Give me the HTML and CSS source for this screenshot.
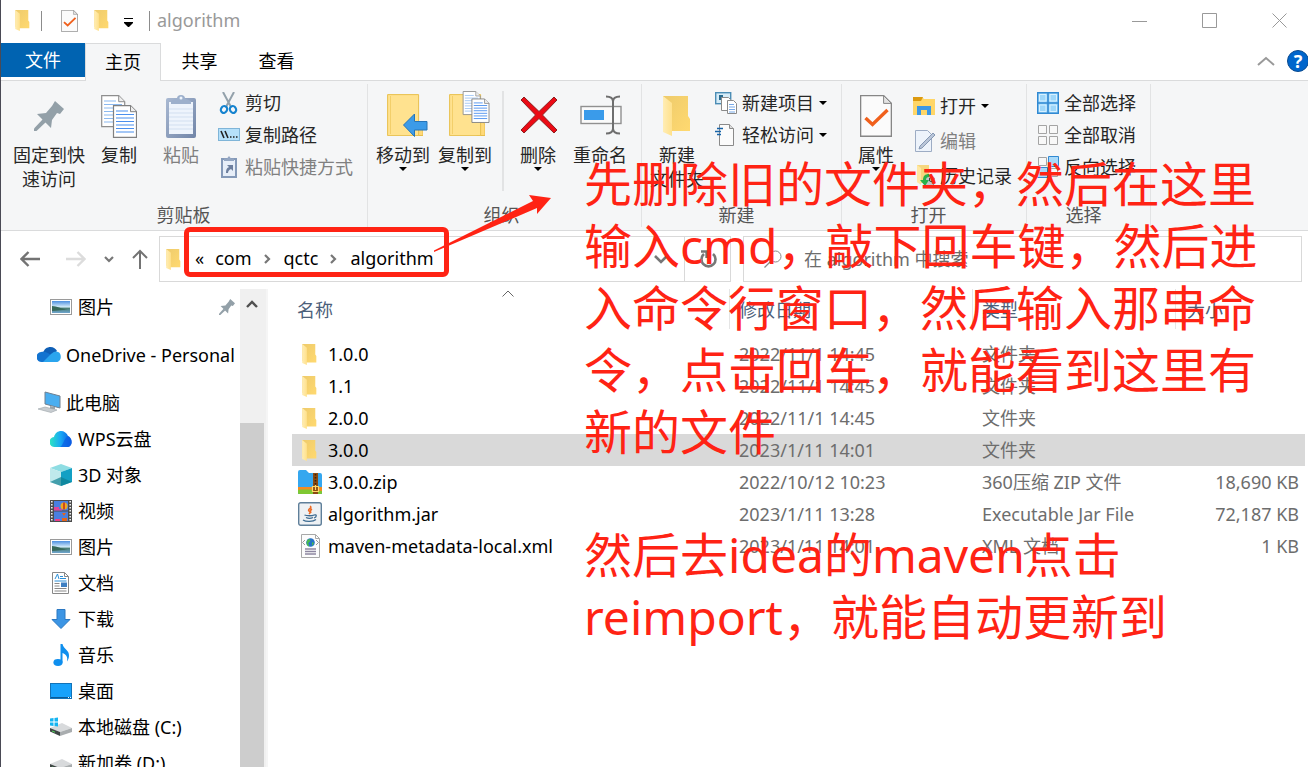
FILE: index.html
```
<!DOCTYPE html>
<html lang="zh-CN">
  <head>
    <meta charset="utf-8">
    <meta name="viewport" content="width=device-width, initial-scale=1.0">
    <title>algorithm</title>
    <link rel="stylesheet" href="styles.css">
  </head>
  <body>
    <!-- icon set -->
    <svg class="defs" aria-hidden="true">
      <defs>
        <linearGradient id="gFolder" x1="0" y1="0" x2="1" y2="1"><stop offset="0" stop-color="#eecb6c"/><stop offset="1" stop-color="#ffd970"/></linearGradient>
        <linearGradient id="gFlap" x1="0" y1="0" x2="1" y2="0"><stop offset="0" stop-color="#ffedb5"/><stop offset="1" stop-color="#ffe18c"/></linearGradient>
        <linearGradient id="gClip" x1="0" y1="0" x2="1" y2="1"><stop offset="0" stop-color="#a9b9d2"/><stop offset="1" stop-color="#7185a8"/></linearGradient>
        <linearGradient id="gWps" x1="0" y1="0" x2="1" y2="0"><stop offset="0" stop-color="#2fe6c0"/><stop offset=".5" stop-color="#18a8f5"/><stop offset="1" stop-color="#0a55e0"/></linearGradient>
        <linearGradient id="gSky" x1="0" y1="0" x2="0" y2="1"><stop offset="0" stop-color="#4d8fe0"/><stop offset=".5" stop-color="#d5ecfa"/><stop offset=".6" stop-color="#4a7d74"/><stop offset="1" stop-color="#6fa6cf"/></linearGradient>
      </defs>
      <symbol id="folder" viewBox="10 4 28 40">
        <path d="M10 4h25v20l2 3v12H18l-8-3z" fill="url(#gFolder)"/>
        <path d="M10 4l9 7v33l-9-4z" fill="url(#gFlap)"/>
      </symbol>
      <symbol id="pin" viewBox="9 8 30 30">
        <path d="M30 8l9 8-4 5-3-1-5 7-1 8-14-14 9-1 6-7z" fill="#93a0a8"/>
        <path d="M18 26L9 35.500V38h2.500L21 29z" fill="#93a0a8"/>
      </symbol>
      <symbol id="pages" viewBox="0 0 36 43">
        <path d="M.7.700h17l6 6v25H.7z" fill="#fff" stroke="#8e8e8e" stroke-width="1.200"/>
        <path d="M17.700.700v6h6" fill="#eee" stroke="#8e8e8e"/>
        <path d="M3 6h12M3 9.500h18M3 13h18M3 16.500h18M3 20h18M3 23.500h18M3 27h18" stroke="#8bb9f0"/>
        <path d="M12.500 10.700h17l6 6v25.600h-23z" fill="#fff" stroke="#808080" stroke-width="1.200"/>
        <path d="M29.500 10.700v6h6" fill="#eee" stroke="#808080"/>
        <path d="M15 16h12M15 19.500h18M15 23h18M15 26.500h18M15 30h18M15 33.500h18M15 37h18" stroke="#4a8fee" stroke-width="1.200"/>
      </symbol>
      <symbol id="clipboard" viewBox="0 0 30 43">
        <rect x="0" y="3" width="30" height="40" rx="2" fill="url(#gClip)"/>
        <rect x="3" y="7" width="24" height="32" fill="#eef4fc"/>
        <path d="M3 14h24M3 18h24M3 22h24M3 26h24M3 30h24M3 34h24" stroke="#d2dff0"/>
        <path d="M5 9V6l6-2.500a4 3.500 0 0 1 8 0L25 6v3z" fill="#9db0cc"/>
        <circle cx="15" cy="3" r="1.500" fill="#eef4fc"/>
      </symbol>
      <symbol id="check-page" viewBox="10 2 32 42">
        <path d="M10.600 2.600h23l7.800 7.800v32.800H10.600z" fill="#fbfbfb" stroke="#868686" stroke-width="1.400"/>
        <path d="M33.600 2.600v7.800h7.800z" fill="#e3e3e3" stroke="#868686"/>
        <path d="M15.500 25l7 6.500 15-14.500" fill="none" stroke="#f0601c" stroke-width="3.400"/>
      </symbol>
      <symbol id="square-folder" viewBox="0 0 36 44">
        <path d="M28 32h3l3-3 2 4v10.500H28z" fill="#ffd978" stroke="#e6bd4c"/>
        <path d="M.600 2.600h31v41H.6z" fill="#ffe28f" stroke="#e8c04f"/>
        <path d="M3.500 4v38" stroke="#f3cf6a"/>
      </symbol>
      <symbol id="caret" viewBox="0 0 8 4"><path d="M0 0h8L4 4z" fill="#000"/></symbol>
      <symbol id="chevron" viewBox="0 0 10 10"><path d="M3 1l4 4-4 4" fill="none" stroke="#777" stroke-width="2.200"/></symbol>
      <symbol id="picture" viewBox="0 0 22 16">
        <rect x=".5" y=".5" width="21" height="15" fill="#fff" stroke="#9a9a9a"/>
        <rect x="2" y="2" width="18" height="12" fill="url(#gSky)"/>
        <path d="M2 7c5 0 9 3 16 3.500L2 12z" fill="#37685a"/>
      </symbol>
      <symbol id="drive" viewBox="0 0 22 22">
        <path d="M0 12l12-5 10 5-12 4z" fill="#d8dadc"/>
        <path d="M0 12l10 4v4L0 15.500z" fill="#3f4545"/>
        <path d="M10 16l12-4v4l-12 4z" fill="#a9adaf"/>
        <path d="M2 15l3 1.200" stroke="#4fd65a"/>
      </symbol>
    </svg>

    <div class="window">
      <header class="titlebar">
        <svg class="icon-folder"><use href="#folder"/></svg>
        <span class="divider"></span>
        <button class="quick" aria-label="属性"><svg class="quick-check"><use href="#check-page"/></svg></button>
        <button class="quick" aria-label="新建文件夹"><svg class="icon-folder"><use href="#folder"/></svg></button>
        <button class="quick quick-more" aria-label="自定义"><svg width="9" height="9" viewBox="0 0 9 9"><path d="M0 .5h9" stroke="#000"/><path d="M0 4h9v1L5 9H4L0 5z"/></svg></button>
        <span class="divider"></span>
        <span class="title">algorithm</span>
        <div class="window-buttons">
          <button aria-label="最小化"><svg viewBox="0 0 16 16"><path d="M0 8.500h15"/></svg></button>
          <button aria-label="最大化"><svg viewBox="0 0 16 16"><path d="M.5.500h14v14H.5z"/></svg></button>
          <button aria-label="关闭"><svg viewBox="0 0 16 16"><path d="M.5.500l14 14M14.500.500l-14 14"/></svg></button>
        </div>
      </header>

      <nav class="tabs">
        <button class="tab tab-file">文件</button>
        <button class="tab tab-active">主页</button>
        <button class="tab">共享</button>
        <button class="tab">查看</button>
        <div class="tabs-right">
          <button aria-label="折叠功能区"><svg width="18" height="10" viewBox="0 0 18 10"><path d="M1 9l8-7 8 7" fill="none" stroke="#999" stroke-width="2"/></svg></button>
          <button class="help" aria-label="帮助">?</button>
        </div>
      </nav>

      <section class="ribbon">
        <div class="group group-clipboard">
          <div class="group-body">
            <button class="big big-wide"><span class="big-icon"><svg width="30" height="30"><use href="#pin"/></svg></span>固定到快<br>速访问</button>
            <button class="big"><span class="big-icon"><svg width="36" height="43"><use href="#pages"/></svg></span>复制</button>
            <button class="big disabled"><span class="big-icon"><svg width="30" height="43"><use href="#clipboard"/></svg></span>粘贴</button>
            <div class="small-list">
              <button class="small">
                <svg viewBox="0 0 22 22"><path d="M5 0l7.500 14M16 0L8.500 14" stroke="#93a1ab" stroke-width="2"/><g fill="none" stroke="#1583cf" stroke-width="2.200"><ellipse cx="6" cy="17.500" rx="3" ry="3.500" transform="rotate(30 6 17.500)"/><ellipse cx="15" cy="17.500" rx="3" ry="3.500" transform="rotate(-30 15 17.500)"/></g></svg>剪切</button>
              <button class="small">
                <svg viewBox="0 0 22 22"><rect x=".5" y="4.500" width="21" height="12" fill="#b5e0fa" stroke="#7fb5d8"/><path d="M3 7l3 7M7 7l3 7" stroke="#222" stroke-width="1.600"/><path d="M12 13h1.500M15 13h1.500M18 13h1.500" stroke="#222" stroke-width="1.600"/></svg>复制路径</button>
              <button class="small disabled">
                <svg viewBox="0 0 22 22"><rect x="4" y="3" width="14" height="18" fill="#e7eef8" stroke="#8499b8" stroke-width="2"/><path d="M6 5V2.500h3L11 0l2 2.500h3V5z" fill="#93a6c2"/><path d="M8 17c0-4 1-5 3-6l-2-2h6v6l-2-2c-2 1-3 2-3 4z" fill="#6d7f9e"/></svg>粘贴快捷方式</button>
            </div>
          </div>
          <div class="group-name">剪贴板</div>
        </div>

        <div class="group group-organize">
          <div class="group-body">
            <button class="big"><span class="big-icon">
              <svg viewBox="0 0 48 48"><use href="#square-folder" x="8" y="0" width="36" height="44"/><path d="M24.500 33l11-11v7.500H48V38H35.500v6.500z" fill="#3c9be8" stroke="#2674b8"/></svg>
            </span>移动到<svg class="caret"><use href="#caret"/></svg></button>
            <button class="big"><span class="big-icon">
              <svg viewBox="0 0 48 48"><use href="#square-folder" x="8" y="0" width="36" height="44"/><use href="#pages" x="21" y="-1" width="28" height="32"/></svg>
            </span>复制到<svg class="caret"><use href="#caret"/></svg></button>
            <span class="group-split"></span>
            <button class="big"><span class="big-icon">
              <svg viewBox="0 0 48 48"><path d="M7 8l3-3 15 14.500L40 5l3 3-14.500 15L43 38l-3 3-15-14.500L10 41l-3-3 14.500-15z" fill="#eb0a14" stroke="#8c2020"/></svg>
            </span>删除<svg class="caret"><use href="#caret"/></svg></button>
            <button class="big"><span class="big-icon">
              <svg viewBox="0 0 48 48"><rect x="5" y="14.500" width="40" height="17" fill="#fafafa" stroke="#909090" stroke-width="1.400"/><rect x="8" y="18" width="20" height="10" fill="#3a9bea"/><path d="M30 4.500c4 0 7 1 7 5v27c0 4-3 5-7 5M44 4.500c-4 0-7 1-7 5v27c0 4 3 5 7 5" fill="none" stroke="#6e6e6e" stroke-width="2"/></svg>
            </span>重命名</button>
          </div>
          <div class="group-name">组织</div>
        </div>

        <div class="group group-new">
          <div class="group-body">
            <button class="big"><span class="big-icon"><svg width="28" height="40"><use href="#folder"/></svg></span>新建<br>文件夹</button>
            <div class="small-list">
              <button class="small">
                <svg viewBox="0 0 22 22"><rect x=".7" y=".7" width="15" height="11" fill="#d5ecf8" stroke="#4b8db5" stroke-width="1.400"/><rect x="4" y="3" width="4" height="5" fill="#2b6b8f"/><path d="M6.500 5.500h7l2 2v11h-9z" fill="#fff" stroke="#8a8a8a"/><path d="M12.500 8.500h6l3 3v10h-9z" fill="#fff" stroke="#8a8a8a"/><path d="M14 12.500h5M14 15h6M14 17.500h6M14 20h6" stroke="#77a9e8"/></svg>新建项目<svg class="caret"><use href="#caret"/></svg></button>
              <button class="small">
                <svg viewBox="0 0 22 22"><path d="M4.500.500h10l4 4v17h-14z" fill="#fbfbfb" stroke="#8a8a8a"/><path d="M14.500.500v4h4" fill="#ddd" stroke="#8a8a8a"/><path d="M2 4.500h6M0 7.500h6M2 10.500h4" stroke="#1763a8" stroke-width="1.300"/></svg>轻松访问<svg class="caret"><use href="#caret"/></svg></button>
            </div>
          </div>
          <div class="group-name">新建</div>
        </div>

        <div class="group group-open">
          <div class="group-body">
            <button class="big"><span class="big-icon"><svg width="32" height="42"><use href="#check-page"/></svg></span>属性<svg class="caret"><use href="#caret"/></svg></button>
            <div class="small-list small-list-loose">
              <button class="small">
                <svg viewBox="0 0 22 22"><path d="M0 2h9l2 2h11v16H0z" fill="#ffd667"/><path d="M0 2h10l-2 4H0z" fill="#dc9a10"/><path d="M4 20v-9h14v9h-4v-5H8v5z" fill="#3c97e4"/></svg>打开<svg class="caret"><use href="#caret"/></svg></button>
              <button class="small disabled">
                <svg viewBox="0 0 22 22"><path d="M2.500.500h12l4 4v17h-16z" fill="#edf3fb" stroke="#9dacc4"/><path d="M20 3l2 2L9 18l-3 1 1-3z" fill="#b9c5d8" stroke="#8497b3"/></svg>编辑</button>
              <button class="small">
                <svg viewBox="0 0 22 22"><path d="M4 0h12v18H8l-4-1z" fill="#f6d77f"/><path d="M4 0l4 3v17l-4-3z" fill="#ffe7a2"/><circle cx="16.500" cy="16" r="5.500" fill="#c2c7c9" stroke="#777"/><path d="M16.500 13v3l3 1" fill="none" stroke="#444"/><path d="M16 9c-4 0-6 2-6 6H7l5 6 4-6h-3c0-2 1-3 3-3z" fill="#2bb24a"/></svg>历史记录</button>
            </div>
          </div>
          <div class="group-name">打开</div>
        </div>

        <div class="group group-select">
          <div class="group-body">
            <div class="small-list">
              <button class="small">
                <svg viewBox="0 0 22 22"><path d="M.7.700h20.600v20.600H.7z" fill="#9ed7fa" stroke="#3189d2" stroke-width="1.400"/><path d="M11 0v22M0 11h22" stroke="#3189d2" stroke-width="1.600"/><path d="M2.500 2.500h6.500v6.500H2.500zM13 2.500h6.500v6.500H13zM2.500 13h6.500v6.500H2.500zM13 13h6.500v6.500H13z" fill="none" stroke="#d7f0ff"/></svg>全部选择</button>
              <button class="small">
                <svg viewBox="0 0 22 22"><path d="M1.500 1.500h8v8h-8zM12.500 1.500h8v8h-8zM1.500 12.500h8v8h-8zM12.500 12.500h8v8h-8z" fill="#f8f8f8" stroke="#a4a4a4"/></svg>全部取消</button>
              <button class="small">
                <svg viewBox="0 0 22 22"><path d="M1.500 1.500h8v8h-8zM12.500 12.500h8v8h-8z" fill="#f8f8f8" stroke="#a4a4a4"/><path d="M11.500.500h10v10h-10zM.5 11.500h10v10H.5z" fill="#a9dafa" stroke="#3189d2"/></svg>反向选择</button>
            </div>
          </div>
          <div class="group-name">选择</div>
        </div>
      </section>

      <div class="address-bar">
        <div class="history">
          <button aria-label="返回"><svg width="20" height="16" viewBox="0 0 20 16"><path d="M20 8H2M8.500 1L1.500 8l7 7" fill="none" stroke="#737373" stroke-width="2.400"/></svg></button>
          <button aria-label="前进"><svg width="20" height="16" viewBox="0 0 20 16"><path d="M0 8h18M11.500 1l7 7-7 7" fill="none" stroke="#dcdcdc" stroke-width="2.400"/></svg></button>
          <button aria-label="最近浏览的位置"><svg width="10" height="10" viewBox="0 0 10 10"><path d="M1 3l4 4 4-4" fill="none" stroke="#777" stroke-width="2.200"/></svg></button>
          <button aria-label="上移"><svg width="16" height="20" viewBox="0 0 16 20"><path d="M8 20V2M1 9l7-7 7 7" fill="none" stroke="#737373" stroke-width="2"/></svg></button>
        </div>
        <div class="path">
          <svg class="icon-folder"><use href="#folder"/></svg>
          <button class="crumb crumb-more">«</button>
          <button class="crumb">com</button>
          <svg class="crumb-arrow"><use href="#chevron"/></svg>
          <button class="crumb">qctc</button>
          <svg class="crumb-arrow"><use href="#chevron"/></svg>
          <button class="crumb">algorithm</button>
          <button class="path-drop" aria-label="展开"><svg width="14" height="10" viewBox="0 0 14 10"><path d="M1 2l6 6 6-6" fill="none" stroke="#777" stroke-width="2.600"/></svg></button>
          <button class="path-refresh" aria-label="刷新"><svg width="18" height="18" viewBox="0 0 18 18"><path d="M14 4a7 7 0 1 1-9 0" fill="none" stroke="#777" stroke-width="2.600"/><path d="M2 1.500h5.500V8" fill="none" stroke="#777" stroke-width="2.400"/></svg></button>
        </div>
        <label class="search">
          <svg width="18" height="18" viewBox="0 0 18 18"><circle cx="11.500" cy="6.500" r="5.500" fill="none" stroke="#888"/><path d="M7.500 10.500L.5 17.500" stroke="#888" stroke-width="1.300"/></svg>
          <input type="search" placeholder="在 algorithm 中搜索" aria-label="搜索">
        </label>
      </div>

      <main class="content">
        <nav class="sidebar">
          <ul class="tree">
            <li class="tree-child tree-pinned"><a href="#"><svg class="pic"><use href="#picture"/></svg>图片</a><svg class="pin-mark"><use href="#pin"/></svg></li>
            <li class="tree-root"><a href="#"><svg viewBox="0 0 24 24"><path d="M6 10c1-4 4-6 7.500-6 3 0 5.500 2 6.500 4l-7 6z" fill="#0f5fb6"/><path d="M5 19a5 5 0 0 1-1-10c4-1 7 1 10 3l-6 7z" fill="#1273d0"/><path d="M6 19l8-8c3-3 6-3 7-2 4 1 4 10-2 10z" fill="#2aa5ee"/></svg>OneDrive - Personal</a></li>
            <li class="tree-root"><a href="#"><svg viewBox="0 0 24 24"><path d="M8 1l15 4v12L8 13z" fill="#4aaef0" stroke="#708090"/><path d="M13 15l5 1v2h-5z" fill="#9aa3a8"/><path d="M1 18l7-2 12 3-6 2.500z" fill="#c8cdd1" stroke="#9aa3a8" stroke-width=".6"/></svg>此电脑</a></li>
            <li class="tree-child"><a href="#"><svg viewBox="0 0 22 22"><path d="M5 19a5 5 0 0 1-1-10c1-4 4-6 7-6s6 2 7 5c5 2 5 11-1 11z" fill="url(#gWps)"/><path d="M10 19c3-1 4-9 8-11 5 2 5 11-1 11z" fill="#0c5ee4" opacity=".7"/></svg>WPS云盘</a></li>
            <li class="tree-child"><a href="#"><svg viewBox="0 0 22 22"><path d="M0 4l11-4 11 4-11 4z" fill="#8fdde3"/><path d="M0 4l11 4v14L0 18z" fill="#bfe9ec"/><path d="M22 4L11 8v14l11-4z" fill="#13a0c4"/><path d="M0 18l11-5 11 5-11 4z" fill="#0f7f92" opacity=".7"/></svg>3D 对象</a></li>
            <li class="tree-child"><a href="#"><svg viewBox="0 0 22 22"><path d="M0 0h22v22H0z" fill="#4c4c4c"/><path d="M4 1h14v9.500H4zM4 11.500h14V21H4z" fill="#4a7fe0"/><path d="M1.800 1v20M20.200 1v20" stroke="#eee" stroke-width="1.600" stroke-dasharray="1.600 1.400"/><circle cx="14" cy="6" r="3.500" fill="#f0a91e"/><path d="M14 2.500v7" stroke="#c22a1e" stroke-width="1.500"/><path d="M4 7h5v2h3v1.500H4z" fill="#e0459a"/><path d="M12 13h4l-2 3zM12 18h5v3h-5z" fill="#e4651c"/><path d="M5 19h5v2H5z" fill="#ec3f8a"/></svg>视频</a></li>
            <li class="tree-child"><a href="#"><svg class="pic"><use href="#picture"/></svg>图片</a></li>
            <li class="tree-child"><a href="#"><svg viewBox="0 0 22 22"><path d="M2.500.500h12l4 4v17h-16z" fill="#fff" stroke="#888"/><path d="M14.500.500v4h4" fill="none" stroke="#888"/><path d="M5 7l2.500-5L9 7M10 4.500h3M10 6.500h6M4.500 9h12" fill="none" stroke="#2a8fd8"/><path d="M4.500 11.500h5M4.500 14h5M4.500 16.500h12M4.500 19h12" stroke="#888"/><path d="M11 10.500h6v4.500h-6z" fill="#3e7fc2"/></svg>文档</a></li>
            <li class="tree-child"><a href="#"><svg viewBox="0 0 22 22"><path d="M7 1.500h8v10h5l-9 9-9-9h5z" fill="#3c95e4" stroke="#2b78c2"/></svg>下载</a></li>
            <li class="tree-child"><a href="#"><svg viewBox="0 0 22 22"><ellipse cx="8" cy="18.500" rx="4.600" ry="3.400" fill="#0f8fee"/><path d="M10.500 0h2c1 5 7 6 6.500 12-.3 3-1 4-2 5.500 1-5-1-7-4.500-8.500v9.500h-2z" fill="#0f8fee"/></svg>音乐</a></li>
            <li class="tree-child"><a href="#"><svg viewBox="0 0 22 22"><rect x=".5" y="3.500" width="21" height="15" fill="#18a2fb" stroke="#1273b8"/><path d="M1 17.500h20" stroke="#0b5a96"/><path d="M18 17.500h1M20 17.500h1" stroke="#fff"/></svg>桌面</a></li>
            <li class="tree-child"><a href="#"><svg viewBox="0 0 22 22"><use href="#drive"/><path d="M0 2.500l3.500-.5v3.500H0zM4.500 2L8 1.500v4H4.500zM0 6.500h3.500V10L0 9.500zM4.500 6.500H8v4l-3.500-.5z" fill="#15b4f1"/></svg>本地磁盘 (C:)</a></li>
            <li class="tree-child"><a href="#"><svg viewBox="0 0 22 22"><use href="#drive"/></svg>新加卷 (D:)</a></li>
          </ul>
          <div class="scroll">
            <button aria-label="向上滚动"><svg width="12" height="10" viewBox="0 0 12 10"><path d="M1 8l5-5 5 5" fill="none" stroke="#505050" stroke-width="2.400"/></svg></button>
            <div class="scroll-thumb"></div>
          </div>
        </nav>

        <section class="files">
          <svg class="sort-mark" width="12" height="7" viewBox="0 0 12 7"><path d="M.5 6.500L6 1l5.500 5.500" fill="none" stroke="#666"/></svg>
          <table>
            <thead>
              <tr><th>名称</th><th class="col-date">修改日期</th><th class="col-type">类型</th><th class="col-size">大小</th></tr>
            </thead>
            <tbody>
              <tr><td><span class="file"><svg class="icon-folder"><use href="#folder"/></svg>1.0.0</span></td><td>2022/11/1 14:45</td><td>文件夹</td><td></td></tr>
              <tr><td><span class="file"><svg class="icon-folder"><use href="#folder"/></svg>1.1</span></td><td>2022/11/1 14:45</td><td>文件夹</td><td></td></tr>
              <tr><td><span class="file"><svg class="icon-folder"><use href="#folder"/></svg>2.0.0</span></td><td>2022/11/1 14:45</td><td>文件夹</td><td></td></tr>
              <tr class="selected"><td><span class="file"><svg class="icon-folder"><use href="#folder"/></svg>3.0.0</span></td><td>2023/1/11 14:01</td><td>文件夹</td><td></td></tr>
              <tr><td><span class="file">
                <svg viewBox="0 0 24 24"><path d="M0 2a2 2 0 0 1 2-2h6l3 3h11a2 2 0 0 1 2 2v19H0z" fill="#35a7ef"/><path d="M0 17h24v4H0z" fill="#f58a1f"/><path d="M0 20c8-1 16 0 24 1v2a1 1 0 0 1-1 1H1a1 1 0 0 1-1-1z" fill="#7fc832"/><path d="M15 3h5v21h-5z" fill="#8a4a12"/><path d="M17.500 4v11" stroke="#3d2208" stroke-width="1.600" stroke-dasharray="1.500 1.500"/><path d="M14.500 16.500h6v5h-6zM17.500 15v5" fill="none" stroke="#ffd86a" stroke-width="1.200"/></svg>3.0.0.zip</span></td><td>2022/10/12 10:23</td><td>360压缩 ZIP 文件</td><td>18,690 KB</td></tr>
              <tr><td><span class="file">
                <svg viewBox="0 0 24 24"><rect x=".7" y=".7" width="22.600" height="22.600" rx="2" fill="#eef1f4" stroke="#5f7f9a" stroke-width="1.400"/><path d="M12 4c3 2-3 3-1 5s1 2 0 3M14 7c-2 1-2 2-1 4" fill="none" stroke="#ec6a25" stroke-width="1.500"/><path d="M6.500 13c2 1 8 1 9.500 0M8 15.500c2 1 5 1 7 0M16 13c3-1 3 2 0 3M5 18c3 2 10 2 13-.5" fill="none" stroke="#3e6c92" stroke-width="1.300"/></svg>algorithm.jar</span></td><td>2023/1/11 13:28</td><td>Executable Jar File</td><td>72,187 KB</td></tr>
              <tr><td><span class="file">
                <svg viewBox="0 0 24 24"><path d="M3.500.500h14l4 4v19h-18z" fill="#fcfcfc" stroke="#a8a8a8"/><path d="M17.500.500v4h4" fill="none" stroke="#a8a8a8"/><circle cx="12.500" cy="8.500" r="4.300" fill="#2572c8"/><path d="M10 5.500c3-1 3 2 1 3s1 2 0 4c-3-1-3-5-1-7zM14 8l2 1-2 3z" fill="#48ba4d"/><path d="M7 6L4.500 8.500 7 11M18 6l2.500 2.500L18 11" fill="none" stroke="#999"/><path d="M7 15h11M7 17.500h11M7 20h11" stroke="#8d86a0" stroke-width="1.300"/></svg>maven-metadata-local.xml</span></td><td>2023/1/11 14:01</td><td>XML 文档</td><td>1 KB</td></tr>
            </tbody>
          </table>
        </section>
      </main>
    </div>

    <!-- notes drawn over the window -->
    <div class="mark-box"></div>
    <svg class="mark-arrow" width="118" height="58" viewBox="0 0 118 58"><path d="M1 56.500L100 7l-4-6 22 3-14 16v-6L1 58z" fill="#ff2314"/></svg>
    <p class="note note-first">先删除旧的文件夹，然后在这里<br>输入cmd，敲下回车键，然后进<br>入命令行窗口，然后输入那串命<br>令，点击回车，就能看到这里有<br>新的文件</p>
    <p class="note note-second">然后去idea的maven点击<br>reimport，就能自动更新到</p>
  </body>
</html>
```
FILE: styles.css
```
* {
  box-sizing: border-box;
}
body {
  margin: 0;
  height: 100vh;
  position: relative;
  overflow: hidden;
  background-color: #fff;
  color: #000;
  font-family: "Noto Sans", "Noto Sans CJK SC", sans-serif;
  font-size: 18px;
  line-height: 24px;
}
button {
  border: 0;
  padding: 0;
  margin: 0;
  background: none;
  font: inherit;
  color: inherit;
}
a {
  color: inherit;
  text-decoration: none;
}
svg {
  flex: none;
}
.defs {
  position: absolute;
  width: 0;
  height: 0;
}
.window {
  height: 100%;
  display: flex;
  flex-direction: column;
  border-left: 1px solid #4a4a55;
}
.icon-folder {
  width: 15px;
  height: 21px;
}

/* title bar */
.titlebar {
  flex: none;
  height: 43px;
  display: flex;
  align-items: center;
  padding: 0 0 2px 14px;
}
.divider {
  width: 1px;
  height: 20px;
  margin-left: 11px;
  background-color: #8c8c8c;
}
.quick {
  display: flex;
  margin-left: 16px;
}
.divider + .quick {
  margin-left: 19px;
}
.quick-check {
  width: 17px;
  height: 22px;
}
.quick-more {
  margin-left: 15px;
  padding-top: 4px;
}
.quick-more + .divider {
  margin-left: 16px;
}
.title {
  margin-left: 7px;
  padding-bottom: 2px;
  color: #999;
}
.window-buttons {
  margin-left: auto;
  display: flex;
  gap: 14px;
}
.window-buttons button {
  display: flex;
  justify-content: center;
  width: 56px;
}
.window-buttons svg {
  width: 16px;
  height: 16px;
  fill: none;
  stroke: #999;
}

/* tabs */
.tabs {
  flex: none;
  height: 38px;
  display: flex;
  border-bottom: 1px solid #dadbdc;
}
.tab {
  width: 77px;
  height: 36px;
}
.tab-file {
  width: 84px;
  height: 34px;
  background-color: #0063b1;
  color: #fff;
}
.tab-active {
  width: 76px;
  height: 38px;
  padding-bottom: 2px;
  border: 1px solid #dadbdc;
  border-bottom: 0;
  background-color: #f5f6f7;
}
.tabs-right {
  margin-left: auto;
  display: flex;
  align-items: center;
  gap: 12px;
  padding-bottom: 2px;
}
.tabs-right button:first-child {
  display: flex;
}
.help {
  width: 22px;
  height: 22px;
  border: 1px solid #0a4a8f;
  border-radius: 50%;
  margin-right: -1px;
  background-color: #0066cc;
  color: #fff;
  font-weight: bold;
  line-height: 20px;
}

/* ribbon */
.ribbon {
  flex: none;
  height: 150px;
  display: flex;
  padding: 3px 0;
  background-color: #f5f6f7;
  border-bottom: 1px solid #dadbdc;
}
.group {
  display: flex;
  flex-direction: column;
  border-right: 1px solid #e2e3e4;
  white-space: nowrap;
  color: #262626;
}
.group-body {
  flex: 1;
  display: flex;
}
.group-name {
  text-align: center;
  color: #555;
}
.group-clipboard {
  padding: 0 14px 0 9px;
}
.group-clipboard .group-name {
  padding-left: 4px;
}
.group-organize {
  padding: 0 10px 0 4px;
}
.group-new {
  padding: 0 14px 0 4px;
}
.group-new .small-list {
  padding-left: 7px;
}
.group-open {
  padding: 0 14px 0 3px;
}
.group-select {
  padding: 0 14px 0 4px;
}
.group-split {
  width: 2px;
  height: 100px;
  margin: 7px 3px 0 6px;
  background-color: #e2e3e4;
}
.big {
  display: block;
  align-self: flex-start;
  width: 62px;
  padding-top: 8px;
}
.big-wide {
  width: 78px;
}
.big-icon {
  display: flex;
  align-items: center;
  justify-content: center;
  height: 48px;
  margin-bottom: 3px;
}
.big-icon svg {
  overflow: visible;
}
.big-icon svg[viewBox] {
  width: 48px;
  height: 48px;
}
.caret {
  width: 8px;
  height: 4px;
}
.big .caret {
  display: block;
  margin: 0 auto;
}
.small-list {
  display: flex;
  flex-direction: column;
  padding: 3px 0 0 6px;
}
.small {
  display: flex;
  align-items: center;
  gap: 5px;
  height: 32px;
}
.small svg[viewBox] {
  width: 22px;
  height: 22px;
}
.small-list-loose {
  padding-top: 4px;
}
.small-list-loose .small {
  height: 35px;
}
.disabled {
  color: #808080;
}

/* address bar */
.address-bar {
  flex: none;
  display: flex;
  height: 58px;
  padding: 5px 6px 7px 19px;
}
.history {
  display: flex;
  align-items: center;
  width: 139px;
}
.history button {
  display: flex;
}
.history button:nth-child(2) {
  margin-left: 26px;
}
.history button:nth-child(3) {
  margin-left: 18px;
}
.history button:nth-child(4) {
  margin-left: 18px;
}
.path {
  flex: 1;
  display: flex;
  align-items: center;
  border: 1px solid #d9d9d9;
  padding-left: 6px;
}
.crumb {
  padding-bottom: 2px;
}
.crumb-more {
  margin: 0 11px 0 14px;
}
.crumb-arrow {
  width: 10px;
  height: 10px;
  margin: 0 12px 0 10px;
}
.path-drop {
  display: flex;
  margin-left: auto;
  margin-right: 16px;
}
.path-refresh {
  display: flex;
  align-items: center;
  justify-content: center;
  align-self: stretch;
  width: 46px;
  border-left: 1px solid #d9d9d9;
}
.search {
  flex: 1;
  display: flex;
  align-items: center;
  max-width: 559px;
  margin-left: 12px;
  padding-left: 20px;
  border: 1px solid #d9d9d9;
}
.search input {
  flex: 1;
  margin: 0 0 0 22px;
  padding: 0;
  border: 0;
  outline: 0;
  font: inherit;
}
.search input::placeholder {
  color: #6d6d6d;
}

/* folders and files */
.content {
  flex: 1;
  min-height: 0;
  display: flex;
}
.sidebar {
  flex: none;
  width: 267px;
  display: flex;
  overflow: hidden;
  border-right: 2px solid #f5f5f5;
}
.tree {
  flex: 1;
  margin: 0;
  padding: 0;
  list-style: none;
  white-space: nowrap;
}
.tree li {
  display: flex;
  align-items: center;
  height: 36px;
}
.tree a {
  display: flex;
  align-items: center;
}
.tree svg {
  width: 22px;
  height: 22px;
}
.tree-child {
  padding-left: 49px;
}
.tree-child a {
  gap: 6px;
}
.tree-root {
  padding-left: 36px;
}
.tree-root a {
  gap: 5px;
}
.tree .tree-root svg {
  width: 24px;
  height: 24px;
}
.tree-pinned,
.tree-pinned + .tree-root {
  margin-bottom: 12px;
}
.tree .pic {
  height: 16px;
}
.tree .pin-mark {
  width: 16px;
  height: 16px;
  margin: 0 5px 0 auto;
}
.scroll {
  width: 26px;
  display: flex;
  flex-direction: column;
  background-color: #f0f0f0;
}
.scroll button {
  display: flex;
  justify-content: center;
  width: 24px;
  padding-top: 10px;
  height: 134px;
}
.scroll-thumb {
  flex: 1;
  width: 24px;
  background-color: #cdcdcd;
}
.files {
  flex: 1;
  position: relative;
  padding: 0 3px 0 24px;
}
.sort-mark {
  position: absolute;
  left: 234px;
  top: 1px;
}
.files table {
  width: 100%;
  table-layout: fixed;
  border-collapse: separate;
  border-spacing: 0;
}
.files th {
  height: 40px;
  padding: 1px 0 0 9px;
  border-left: 1px solid #e5e5e5;
  font-weight: normal;
  text-align: left;
  color: #4c607a;
}
.files th:first-child {
  padding-left: 5px;
  border-left: 0;
}
.files .col-date {
  width: 243px;
}
.files .col-type {
  width: 203px;
}
.files .col-size {
  width: 130px;
  padding-left: 11px;
}
.files tbody:before {
  content: "";
  display: block;
  height: 9px;
}
.files td {
  height: 32px;
  padding: 0 0 0 10px;
  color: #6d6d6d;
}
.files td:first-child {
  padding-left: 6px;
  color: #000;
}
.files td:last-child {
  padding: 0 6px 0 0;
  text-align: right;
}
.file {
  display: flex;
  align-items: center;
  gap: 6px;
}
.file svg {
  width: 24px;
  height: 24px;
}
.file .icon-folder {
  width: 15px;
  height: 21px;
  margin: 0 5px 0 4px;
}
.selected {
  background-color: #d9d9d9;
}

/* notes */
.mark-box {
  position: absolute;
  left: 184px;
  top: 227px;
  width: 265px;
  height: 50px;
  border: 5px solid #ff2314;
  border-radius: 6px;
}
.mark-arrow {
  position: absolute;
  left: 433px;
  top: 194px;
}
.note {
  position: absolute;
  left: 584px;
  margin: 0;
  color: #ff2314;
  font-size: 48px;
  line-height: 62px;
  white-space: nowrap;
}
.note-first {
  top: 153px;
}
.note-second {
  top: 524px;
}
```
